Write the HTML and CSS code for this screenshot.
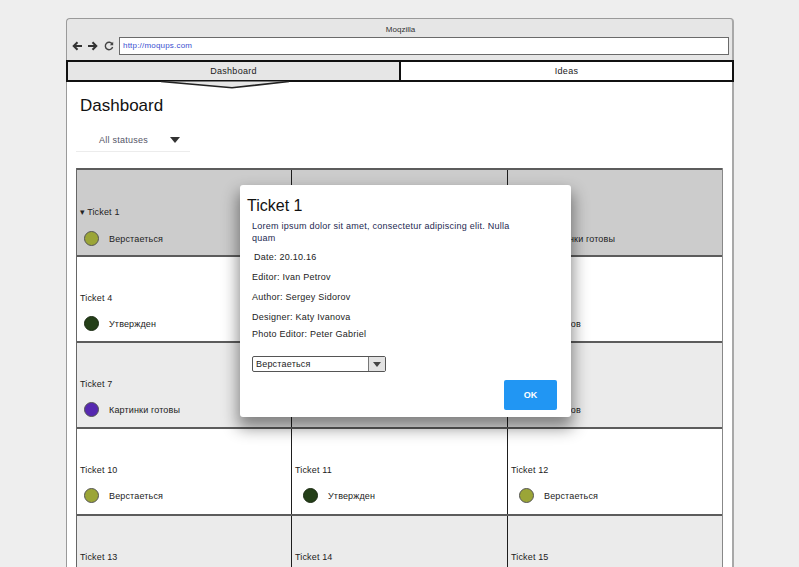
FILE: index.html
```html
<!DOCTYPE html>
<html>
<head>
<meta charset="utf-8">
<title>Moqzilla</title>
<link rel="stylesheet" href="styles.css">
</head>
<body>
<div class="window">
  <div class="titlebar">
    <div class="win-title">Moqzilla</div>
    <div class="nav">
      <svg class="nav-icon" width="11" height="10" viewBox="0 0 11 10"><path d="M10 5H2M5.5 1.2L1.7 5l3.8 3.8" fill="none" stroke="#333" stroke-width="2"/></svg>
      <svg class="nav-icon" width="11" height="10" viewBox="0 0 11 10"><path d="M1 5h8M5.5 1.2L9.3 5 5.5 8.8" fill="none" stroke="#333" stroke-width="2"/></svg>
      <svg class="nav-icon reload" width="10" height="10" viewBox="0 0 10 10"><path d="M8.3 3.2A3.7 3.7 0 1 0 8.6 6" fill="none" stroke="#444" stroke-width="1.4"/><path d="M9.2 0.8V4.2H5.8z" fill="#444"/></svg>
      <div class="address">http://moqups.com</div>
    </div>
  </div>
  <div class="tabs">
    <div class="tab active">Dashboard</div>
    <div class="tab">Ideas</div>
    <svg class="tab-pointer" width="130" height="9" viewBox="0 0 130 9"><path d="M0 0.5L71 6.8 128 0.5z" fill="#e6e6e6"/><path d="M0 0.5L71 6.8 128 0.5" fill="none" stroke="#222" stroke-width="1.6"/></svg>
  </div>
  <div class="content">
    <h1 class="page-title">Dashboard</h1>
    <div class="filter">
      <span class="filter-label">All statuses</span>
      <span class="filter-caret"></span>
    </div>
    <div class="board">
      <div class="row selected">
        <div class="cell"><div class="ticket"><span class="caret">▾</span>Ticket 1</div><div class="status"><span class="dot olive"></span>Верстаеться</div></div>
        <div class="cell"><div class="ticket">Ticket 2</div><div class="status"><span class="dot olive"></span>Верстаеться</div></div>
        <div class="cell"><div class="ticket">Ticket 3</div><div class="status"><span class="dot purple"></span>Картинки готовы</div></div>
      </div>
      <div class="row">
        <div class="cell"><div class="ticket">Ticket 4</div><div class="status"><span class="dot green"></span>Утвержден</div></div>
        <div class="cell"><div class="ticket">Ticket 5</div><div class="status"><span class="dot olive"></span>Верстаеться</div></div>
        <div class="cell"><div class="ticket">Ticket 6</div><div class="status"><span class="dot red"></span>Не готов</div></div>
      </div>
      <div class="row alt">
        <div class="cell"><div class="ticket">Ticket 7</div><div class="status"><span class="dot purple"></span>Картинки готовы</div></div>
        <div class="cell"><div class="ticket">Ticket 8</div><div class="status"><span class="dot olive"></span>Верстаеться</div></div>
        <div class="cell"><div class="ticket">Ticket 9</div><div class="status"><span class="dot red"></span>Не готов</div></div>
      </div>
      <div class="row">
        <div class="cell"><div class="ticket">Ticket 10</div><div class="status"><span class="dot olive"></span>Верстаеться</div></div>
        <div class="cell"><div class="ticket">Ticket 11</div><div class="status"><span class="dot green"></span>Утвержден</div></div>
        <div class="cell"><div class="ticket">Ticket 12</div><div class="status"><span class="dot olive"></span>Верстаеться</div></div>
      </div>
      <div class="row alt">
        <div class="cell"><div class="ticket">Ticket 13</div></div>
        <div class="cell"><div class="ticket">Ticket 14</div></div>
        <div class="cell"><div class="ticket">Ticket 15</div></div>
      </div>
    </div>
  </div>
</div>

<div class="modal">
  <div class="modal-title">Ticket 1</div>
  <p class="lorem">Lorem ipsum dolor sit amet, consectetur adipiscing elit. Nulla quam</p>
  <p class="meta date">Date: 20.10.16</p>
  <p class="meta">Editor: Ivan Petrov</p>
  <p class="meta">Author: Sergey Sidorov</p>
  <p class="meta">Designer: Katy Ivanova</p>
  <p class="meta photo">Photo Editor: Peter Gabriel</p>
  <div class="select"><span class="select-value">Верстаеться</span><span class="select-btn"><span class="select-arrow"></span></span></div>
  <button class="ok">OK</button>
</div>
</body>
</html>
```
FILE: styles.css
```css
* { box-sizing: border-box; }
html, body {
  margin: 0;
  height: 567px;
  overflow: hidden;
  background: #eeeeee;
  font-family: "Liberation Sans", Arial, sans-serif;
  color: #222;
}
.window {
  margin: 18px 0 0 66px;
  width: 668px;
  height: 549px;
  display: flex;
  flex-direction: column;
}
.titlebar {
  background: #e6e6e6;
  border: 1px solid #9a9a9a;
  border-right: 2px solid #a8a8a8;
  border-bottom: none;
  border-radius: 4px 4px 0 0;
  padding: 4px 3px 5px 5px;
}
.win-title {
  height: 14px;
  line-height: 14px;
  text-align: center;
  font-size: 8px;
  color: #333;
}
.nav {
  display: flex;
  align-items: center;
  height: 18px;
}
.nav-icon { flex: none; margin-right: 4px; }
.reload { margin-left: 2px; margin-right: 5px; }
.address {
  flex: 1;
  height: 18px;
  border: 1px solid #6a6a6a;
  background: #fff;
  font-size: 8px;
  letter-spacing: 0.2px;
  line-height: 16px;
  padding-left: 3px;
  color: #3a4fd0;
}
.tabs {
  position: relative;
  display: flex;
  height: 22px;
  border: 2px solid #111;
}
.tab {
  flex: 1;
  text-align: center;
  font-size: 9px;
  letter-spacing: 0.3px;
  line-height: 18px;
  color: #222;
  background: #fff;
}
.tab.active {
  background: #e6e6e6;
  border-right: 2px solid #111;
}
.tab-pointer {
  position: absolute;
  left: 93px;
  top: 19px;
}
.content {
  flex: 1;
  background: #fff;
  border-left: 1px solid #9a9a9a;
  border-right: 2px solid #a8a8a8;
  padding: 14px 9px 0 9px;
  overflow: hidden;
}
.page-title {
  margin: 0 0 0 4px;
  font-size: 17px;
  line-height: 20px;
  font-weight: normal;
  color: #111;
}
.filter {
  margin-top: 12px;
  width: 114px;
  height: 24px;
  display: flex;
  align-items: center;
  padding-left: 23px;
  border-bottom: 1px solid #ececec;
}
.filter-label {
  font-size: 9px;
  letter-spacing: 0.25px;
  color: #555566;
  flex: 1;
}
.filter-caret {
  width: 0;
  height: 0;
  border-left: 5px solid transparent;
  border-right: 5px solid transparent;
  border-top: 6px solid #333;
  margin-right: 10px;
}
.board {
  margin-top: 16px;
  border-left: 1px solid #666;
  border-right: 1px solid #888;
}
.row {
  display: grid;
  grid-template-columns: 214px 216px 215px;
  height: 86px;
  border-top: 2px solid #5c5c5c;
  background: #fff;
}
.row:first-child { height: 87px; }
.row:nth-child(4) { height: 87px; }
.row.selected { background: #cccccc; }
.row.selected .cell { padding-top: 36px; }
.row.selected .status { margin-top: 13px; }
.row.alt { background: #ebebeb; }
.cell {
  padding: 35px 0 0 3px;
  font-size: 9px;
  letter-spacing: 0.15px;
}
.cell + .cell { border-left: 1px solid #1e1e1e; }
.ticket {
  line-height: 12px;
  color: #222;
}
.caret { font-size: 9px; margin-right: 2px; }
.status {
  margin-top: 12px;
  display: flex;
  align-items: center;
  height: 15px;
  padding-left: 8px;
  color: #222;
}
.cell:first-child .status { padding-left: 4px; }
.dot {
  width: 15px;
  height: 15px;
  border-radius: 50%;
  border: 1px solid #555;
  margin-right: 10px;
  flex: none;
}
.dot.olive { background: #9ba537; }
.dot.green { background: #243f18; border-color: #1a2a12; }
.dot.purple { background: #5628b0; }
.dot.red { background: #c0392b; }
.modal {
  position: absolute;
  left: 240px;
  top: 185px;
  width: 331px;
  height: 232px;
  background: #fff;
  border-radius: 3px;
  box-shadow: 0 9px 16px 2px rgba(0,0,0,0.45);
  padding: 11px 14px 6px 12px;
  display: flex;
  flex-direction: column;
  font-size: 9px;
}
.modal-title {
  font-size: 16px;
  line-height: 19px;
  margin-left: -5px;
  color: #111;
}
.modal p { margin: 0; line-height: 12px; letter-spacing: 0.25px; }
.lorem {
  margin-top: 5px !important;
  width: 266px;
  color: #1d2950;
}
.meta { margin-top: 8px !important; color: #222; }
.meta.date { margin-top: 7px !important; padding-left: 2px; }
.meta.photo { margin-top: 5px !important; }
.select {
  margin-top: 16px;
  width: 134px;
  height: 16px;
  border: 1px solid #555;
  border-radius: 2px;
  display: flex;
  font-size: 9px;
  flex: none;
}
.select-value {
  flex: 1;
  line-height: 14px;
  padding-left: 3px;
  letter-spacing: 0.2px;
  color: #222;
}
.select-btn {
  width: 17px;
  background: #e2e2e2;
  border-left: 1px solid #777;
  display: flex;
  align-items: center;
  justify-content: center;
}
.select-arrow {
  width: 0;
  height: 0;
  border-left: 4px solid transparent;
  border-right: 4px solid transparent;
  border-top: 5px solid #444;
}
.ok {
  margin-top: 8px;
  align-self: flex-end;
  width: 53px;
  height: 30px;
  border: none;
  border-radius: 2px;
  background: #2196f3;
  color: #fff;
  font-family: "Liberation Sans", Arial, sans-serif;
  font-weight: bold;
  font-size: 9px;
  padding: 0;
}
```
